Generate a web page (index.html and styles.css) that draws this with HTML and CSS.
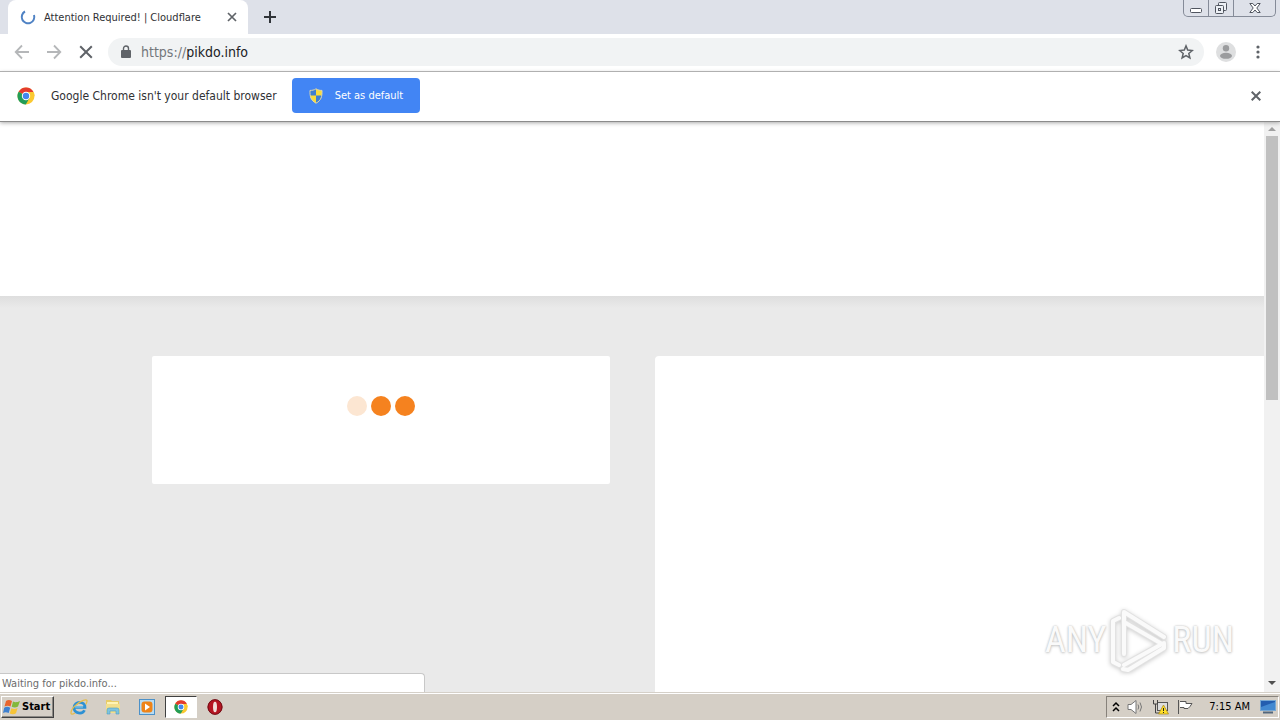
FILE: index.html
```html
<!DOCTYPE html>
<html lang="en">
<head>
<meta charset="utf-8">
<title>Attention Required! | Cloudflare</title>
<link rel="stylesheet" href="styles.css">
</head>
<body>
<header class="tabstrip">
  <div class="tab-edge"></div>
  <div class="tab">
    <svg class="spinner" width="16" height="16" viewBox="0 0 16 16"><path d="M5 2.500A6.300 6.300 0 1 0 14 6" fill="none" stroke="#4f82c4" stroke-width="2"/></svg>
    <span class="tab-title">Attention Required! | Cloudflare</span>
    <button class="icon-btn" aria-label="Close tab"><svg width="10" height="10" viewBox="0 0 10 10"><path d="M1 1l8 8M9 1l-8 8" stroke="#5f6368" stroke-width="1.700"/></svg></button>
  </div>
  <button class="icon-btn new-tab" aria-label="New tab"><svg width="12" height="12" viewBox="0 0 12 12"><path d="M6 0v12M0 6h12" stroke="#303439" stroke-width="2"/></svg></button>
  <div class="window-controls">
    <button class="win-btn" aria-label="Minimize"><svg width="12" height="14" viewBox="0 0 12 14"><rect x=".5" y="7.500" width="11" height="4" rx="1" fill="#fff" stroke="#50555f"/></svg></button>
    <button class="win-btn" aria-label="Restore"><svg width="14" height="14" viewBox="0 0 14 14" fill="#edf0f5" stroke="#50555f"><rect x="4.500" y="1.500" width="8" height="8" rx="1"/><rect x="1.500" y="4.500" width="8" height="8" rx="1"/><rect x="4.500" y="7.500" width="2" height="2"/></svg></button>
    <button class="win-btn win-close" aria-label="Close"><svg width="12" height="14" viewBox="0 0 12 14"><path d="M.8 2.500h3L6 5l2.200-2.500h3L7.800 7l3.400 4.500h-3L6 9l-2.200 2.500h-3L4.200 7z" fill="#fff" stroke="#50555f"/></svg></button>
  </div>
</header>

<nav class="toolbar">
  <button class="icon-btn" aria-label="Back"><svg width="16" height="16" viewBox="0 0 16 16" fill="none" stroke="#b5b7b9" stroke-width="1.800"><path d="M15 8H2M8 1.500L1.700 8 8 14.500"/></svg></button>
  <button class="icon-btn" aria-label="Forward"><svg width="16" height="16" viewBox="0 0 16 16" fill="none" stroke="#b5b7b9" stroke-width="1.800"><path d="M1 8h13M8 1.500L14.300 8 8 14.500"/></svg></button>
  <button class="icon-btn" aria-label="Stop"><svg width="16" height="16" viewBox="0 0 16 16"><path d="M2.200 2.200l11.600 11.600M13.800 2.200L2.200 13.800" stroke="#5f6368" stroke-width="2"/></svg></button>
  <div class="omnibox">
    <svg width="10" height="14" viewBox="0 0 10 14"><rect y="5" width="10" height="8" rx="1" fill="#5f6368"/><path d="M2.500 5.500V3.500a2.500 2.500 0 0 1 5 0v2" fill="none" stroke="#5f6368" stroke-width="1.400"/></svg>
    <a class="url" href="https://pikdo.info"><span class="scheme">https://</span>pikdo.info</a>
    <button class="icon-btn" aria-label="Bookmark"><svg width="16" height="16" viewBox="0 0 16 16"><path d="M8 1.900l1.700 4.200 4.600.4-3.500 3 1.100 4.500L8 11.600 4.100 14l1.100-4.500-3.500-3 4.600-.4z" fill="none" stroke="#5f6368" stroke-width="1.500"/></svg></button>
  </div>
  <button class="icon-btn" aria-label="Profile"><svg width="20" height="20" viewBox="0 0 20 20"><circle cx="10" cy="10" r="10" fill="#dedfe0"/><circle cx="10" cy="6.300" r="3.200" fill="#9b9c9e"/><ellipse cx="10" cy="13.800" rx="6" ry="3" fill="#9b9c9e"/></svg></button>
  <button class="icon-btn" aria-label="Menu"><svg width="4" height="14" viewBox="0 0 4 14" fill="#5f6368"><circle cx="2" cy="2" r="1.600"/><circle cx="2" cy="7" r="1.600"/><circle cx="2" cy="12" r="1.600"/></svg></button>
</nav>

<section class="infobar">
  <svg width="18" height="18" viewBox="0 0 18 18"><use href="#chrome"/></svg>
  <span class="infobar-text">Google Chrome isn't your default browser</span>
  <button class="primary"><svg width="14" height="16" viewBox="0 0 14 16"><path d="M7 .8C5 2.200 3 2.400 1 2.400c-.2 6 .7 10 6 12.800z" fill="#3f7fd0"/><path d="M7 .8c2 1.400 4 1.600 6 1.600.2 6-.7 10-6 12.800z" fill="#f8dc3c"/><path d="M1 7.500h6v7.700C3 13 1.400 10.500 1 7.500z" fill="#f8dc3c"/><path d="M7 7.500h6c-.4 3-2 5.500-6 7.700z" fill="#3f7fd0"/><path d="M7 .8C5 2.200 3 2.400 1 2.400c-.2 6 .7 10 6 12.800 5.300-2.800 6.200-6.800 6-12.800-2 0-4-.2-6-1.600z" fill="none" stroke="#dcd7b0"/></svg>Set as default</button>
  <button class="icon-btn infobar-close" aria-label="Dismiss"><svg width="10" height="10" viewBox="0 0 10 10"><path d="M.7.7l8.600 8.600M9.300.7L.7 9.300" stroke="#5f6368" stroke-width="2"/></svg></button>
</section>

<div class="viewport">
  <main class="page">
    <div class="hero"></div>
    <div class="content">
      <div class="card loading"><i class="dot dot-faint"></i><i class="dot"></i><i class="dot"></i></div>
      <div class="card tall"></div>
    </div>
  </main>
  <div class="scrollbar">
    <svg width="16" height="14" viewBox="0 0 16 14"><path d="M4 9l4-4 4 4z" fill="#a0a0a0"/></svg>
    <div class="thumb"></div>
    <svg class="scroll-down" width="16" height="16" viewBox="0 0 16 16"><path d="M4 5h8l-4 4z" fill="#505050"/></svg>
  </div>
  <div class="status">Waiting for pikdo.info...</div>
  <div class="watermark">
    <span class="mark-word">ANY</span>
    <svg width="58" height="64" viewBox="0 0 58 64" fill="none" stroke-linejoin="round" stroke-linecap="round">
      <g stroke="#e2e2e2" stroke-width="6"><path d="M14 46V4L54 29M14 14L52 36 14 57M9 10L3 13V54L9 57M13 61L18 62 54 40V35"/></g>
      <g stroke="#fafafa" stroke-width="4"><path d="M14 46V4L54 29M14 14L52 36 14 57M9 10L3 13V54L9 57M13 61L18 62 54 40V35"/></g>
    </svg>
    <span class="mark-word">RUN</span>
  </div>
</div>

<footer class="taskbar">
  <button class="start"><svg width="18" height="16" viewBox="0 0 18 16"><path d="M3 2c2-1.500 4-1.200 6 0L7.500 7.500c-2-1-4-1-6 0z" fill="#e8642c"/><path d="M10 2.500c2 1 4 1 7-.5l-2 5.500c-2 1.200-4 1.200-6.300.3z" fill="#83b83a"/><path d="M1.200 8.700c2-1.200 4-1 6 0L5.700 14c-2-1-4-1-5.700 0z" fill="#3e80cf"/><path d="M8.400 9.200c2 1 4 1 6.200-.2L13 14.300c-2 1.200-4 1.200-6.200.2z" fill="#f6c437"/></svg>Start</button>
  <div class="launchers">
    <button class="launch" aria-label="Internet Explorer"><svg width="18" height="18" viewBox="0 0 18 18" fill="none"><path d="M4.500 9.500h10.500c.2-7-11-7-11 .3 0 6 8.500 6.800 10.500 2.400" stroke="#2d91d4" stroke-width="2.700"/><path d="M5 15C-1 19 0 12 6 7c5-4.500 11-6.500 11-4 .2 1-.4 2-1.200 3.300" stroke="#e5bd4b" stroke-width="1.300"/><path d="M5 9h8" stroke="#91d4ef"/></svg></button>
    <button class="launch" aria-label="Windows Explorer"><svg width="18" height="18" viewBox="0 0 18 18"><path d="M2 2h5l1 1h7v12H2z" fill="#e8cc67"/><path d="M3 4h11v3H3z" fill="#fff4b6"/><path d="M2 6h14v9H2z" fill="#f3df8c"/><path d="M3 16v-4q0-2 2-2h8q2 0 2 2v4h-3v-3H6v3z" fill="#7fc3df" stroke="#4a9dc2" stroke-width=".6"/></svg></button>
    <button class="launch" aria-label="Media Player"><svg width="18" height="18" viewBox="0 0 18 18"><rect x="1.500" y="1.500" width="15" height="15" fill="#b8dcf3" stroke="#4c91c8"/><rect x="3.500" y="3.500" width="11" height="11" rx="3" fill="#ef8418"/><path d="M7 5.500l5 3.500-5 3.500z" fill="#fff"/></svg></button>
    <button class="launch active" aria-label="Google Chrome"><svg width="14" height="14" viewBox="0 0 18 18"><g id="chrome"><circle cx="9" cy="9" r="8.500" fill="#fbc931"/><path d="M9 9L1.600 4.700a8.500 8.500 0 0 1 14.800 0z" fill="#e33b2e"/><path d="M9 9L1.600 4.700A8.500 8.500 0 0 0 8.800 17.500L12.500 11z" fill="#229d57"/><path d="M9 5h7.500q1 2 1 4L9 9z" fill="#fbc931"/><circle cx="9" cy="9" r="4.200" fill="#fff"/><circle cx="9" cy="9" r="3.200" fill="#4287ed"/></g></svg></button>
    <button class="launch" aria-label="Opera"><svg width="18" height="18" viewBox="0 0 18 18"><circle cx="9" cy="9" r="7.500" fill="#b51522"/><ellipse cx="9" cy="9" rx="7" ry="7.400" fill="none" stroke="#701017"/><ellipse cx="9" cy="9" rx="2" ry="5.300" fill="#f1dfda"/></svg></button>
  </div>
  <div class="tray">
    <svg width="8" height="12" viewBox="0 0 8 12" fill="none" stroke="#000" stroke-width="1.500"><path d="M1 5l3-3 3 3M1 10l3-3 3 3"/></svg>
    <svg width="18" height="16" viewBox="0 0 18 16"><path d="M1 5.500h3l5-4v13l-5-4H1z" fill="#fff" stroke="#777"/><path d="M11 5.500q1.500 2.500 0 5M13 3.500q3 4.500 0 9" fill="none" stroke="#777"/></svg>
    <svg width="18" height="16" viewBox="0 0 18 16"><rect x="5.500" y="3.500" width="10" height="8" fill="#ddd" stroke="#555"/><path d="M1.500 1v4h4V1M3.500 5v9h6" fill="none" stroke="#444"/><path d="M11.500 6l5 9h-10z" fill="#ffdf28" stroke="#a78513" stroke-width=".7"/><path d="M11.500 9v3M11.500 13v1" stroke="#222"/></svg>
    <svg width="16" height="16" viewBox="0 0 16 16"><path d="M1.500 1v14M3 2.500h6v2h6l-2 3-2 2H7v-1H3" fill="#fff" stroke="#555"/></svg>
    <time class="clock">7:15 AM</time>
    <svg width="16" height="14" viewBox="0 0 16 14"><rect x=".5" y=".5" width="15" height="10" fill="#235daf" stroke="#78a8d3"/><path d="M1 7L15 2v8H1z" fill="#4389d1"/><path d="M3 12.500h10" stroke="#52677d" stroke-width="2"/></svg>
  </div>
</footer>
</body>
</html>
```
FILE: styles.css
```css
* { box-sizing: border-box; }
body {
  margin: 0;
  height: 100vh;
  display: flex;
  flex-direction: column;
  overflow: hidden;
  background: #fff;
  color: #303134;
  font: 11px "DejaVu Sans Condensed", "Noto Sans", sans-serif;
}
button { font: inherit; color: inherit; border: 0; padding: 0; background: none; }
svg { display: block; flex: none; }
.icon-btn { display: flex; align-items: center; justify-content: center; min-width: 16px; }

.tabstrip { display: flex; height: 34px; flex: none; background: #dee1e9; }
.tab-edge { width: 8px; }
.tab {
  display: flex;
  align-items: center;
  width: 240px;
  padding: 0 8px 0 12px;
  border-radius: 8px 8px 0 0;
  background: #fff;
}
.tab-title { flex: 1; margin-left: 8px; white-space: nowrap; }
.new-tab { width: 44px; }
.window-controls {
  display: flex;
  height: 17px;
  margin: 0 4px 0 auto;
  border: 1px solid #858b98;
  border-top: 0;
  border-radius: 0 0 5px 5px;
}
.win-btn { display: flex; justify-content: center; width: 24px; padding-top: 1px; }
.win-btn + .win-btn { width: 25px; border-left: 1px solid #858b98; }
.win-btn.win-close { width: 42px; }

.toolbar {
  display: flex;
  align-items: center;
  gap: 16px;
  height: 38px;
  flex: none;
  padding: 0 20px 2px 14px;
  border-bottom: 1px solid #b2b2b2;
}
.toolbar > .icon-btn:last-child { min-width: 4px; margin-left: 4px; }
.omnibox {
  display: flex;
  align-items: center;
  flex: 1;
  height: 28px;
  margin-right: -4px;
  margin-left: -2px;
  padding: 0 10px 0 13px;
  border-radius: 14px;
  background: #f1f3f4;
}
.url { flex: 1; margin-left: 10px; color: #202124; font-size: 14px; text-decoration: none; }
.scheme { color: #73777b; }

.infobar {
  position: relative;
  z-index: 1;
  display: flex;
  align-items: center;
  height: 50px;
  flex: none;
  padding: 0 19px 2px 17px;
  border-bottom: 1px solid #8b8b8b;
  background: #fff;
  box-shadow: 0 1px 4px #aaa;
}
.infobar-text { margin-left: 16px; font-size: 12px; }
.primary {
  display: flex;
  align-items: center;
  gap: 12px;
  height: 35px;
  margin-left: 15px;
  padding: 0 17px;
  border-radius: 4px;
  background: #4285f4;
  color: #fff;
}
.infobar-close { min-width: 10px; margin-left: auto; }

.viewport { position: relative; display: flex; flex: 1; min-height: 0; overflow: hidden; }
.page { display: flex; flex-direction: column; flex: 1; }
.hero { height: 174px; flex: none; }
.content {
  display: grid;
  grid-template-columns: 458px 1fr;
  gap: 45px;
  align-items: start;
  flex: 1;
  padding: 60px 0 0 152px;
  background: linear-gradient(#dedede, #eaeaea 12px);
}
.card { border-radius: 2px; background: #fff; }
.loading { display: flex; justify-content: center; gap: 4px; padding: 40px 0 68px; }
.dot { width: 20px; height: 20px; border-radius: 50%; background: #f5821f; }
.dot-faint { background: #fce6d2; }
.tall { align-self: stretch; border-radius: 4px 0 0 0; }
.scrollbar { display: flex; flex-direction: column; width: 16px; background: #f1f1f1; }
.thumb { height: 264px; margin: 0 2px; background: #c0c0c0; }
.scroll-down { margin-top: auto; }
.status {
  position: absolute;
  left: 0;
  bottom: 0;
  width: 425px;
  padding: 3px 2px 2px;
  border: 1px solid #c8c8c8;
  border-width: 1px 1px 0 0;
  border-radius: 0 4px 0 0;
  background: #fff;
  color: #6c6c6c;
}
.watermark {
  position: absolute;
  right: 46px;
  bottom: 20px;
  display: flex;
  align-items: center;
  gap: 4px;
}
.mark-word {
  color: #fafafa;
  font: 36px "Roboto Condensed", "Open Sans Condensed", Roboto, sans-serif;
  text-shadow: 0 0 2px #bbb, 0 1px 3px #ccc;
}
.watermark svg { filter: drop-shadow(0 1px 2px #ccc); }

.taskbar {
  display: flex;
  align-items: center;
  height: 28px;
  flex: none;
  padding: 0 1px;
  border-top: 1px solid #d5d0c8;
  background: #d5cfc6;
  box-shadow: inset 0 1px #fff;
  color: #000;
}
.start {
  display: flex;
  align-items: center;
  gap: 1px;
  height: 22px;
  padding: 0 3px 0 1px;
  border: 1px solid;
  border-color: #fff #404040 #404040 #fff;
  box-shadow: inset -1px -1px #8c8984;
  font-weight: bold;
}
.launchers { display: flex; margin-left: 9px; }
.launch { display: flex; align-items: center; justify-content: center; width: 32px; height: 22px; margin-right: 2px; }
.active { border: 1px solid; border-color: #404040 #fff #fff #404040; background: #fff; }
.tray {
  display: flex;
  align-items: center;
  gap: 7px;
  height: 22px;
  margin-left: auto;
  padding: 0 2px 0 5px;
  border: 1px solid;
  border-color: #87827b #fff #fff #87827b;
}
.clock { margin: 0 3px 0 9px; }
```
